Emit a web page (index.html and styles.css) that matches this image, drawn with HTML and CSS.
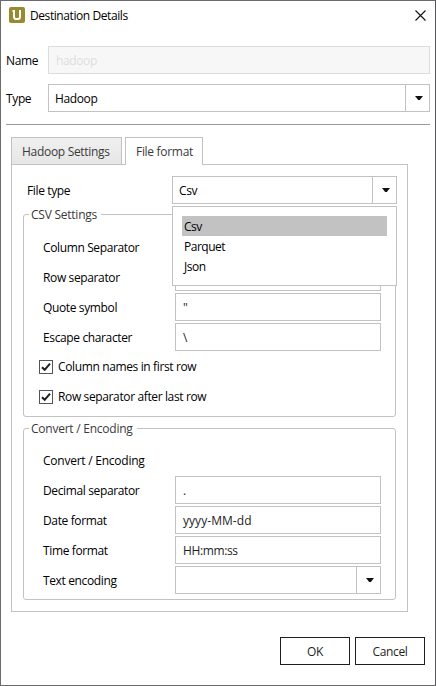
FILE: index.html
```html
<!DOCTYPE html>
<html lang="en">
<head>
<meta charset="utf-8">
<title>Destination Details</title>
<link rel="stylesheet" href="styles.css">
</head>
<body>
<main class="window">
  <header class="titlebar">
    <svg class="logo" width="16" height="16" viewBox="0 0 16 16"><rect width="16" height="16" rx="2" fill="#998a2f"/><path d="M3.5 4H5v5.5Q5 12 7 12h2q2 0 2-2.5V3" fill="none" stroke="#fff" stroke-width="2"/></svg>
    <h1 class="title">Destination Details</h1>
    <svg class="close" width="11" height="11" viewBox="0 0 11 11"><path d="M.5.5l10 10M10.5.5l-10 10" stroke="#111" stroke-width="1.1"/></svg>
  </header>

  <section class="top-form">
    <label class="label">Name</label><div class="field disabled">hadoop</div>
    <label class="label">Type</label>
    <div class="field combo"><span>Hadoop</span><i class="drop"><svg width="8" height="4" viewBox="0 0 8 4"><path d="M0 0h8L4.8 4H3.2z"/></svg></i></div>
  </section>
  <hr class="rule">

  <nav class="tabs">
    <div class="tab"><span>Hadoop Settings</span></div>
    <div class="tab active"><span>File format</span></div>
  </nav>
  <section class="pane">
    <div class="type-row">
      <label class="label">File type</label>
      <div class="combo-wrap">
        <div class="field combo"><span>Csv</span><i class="drop"><svg width="8" height="4" viewBox="0 0 8 4"><path d="M0 0h8L4.8 4H3.2z"/></svg></i></div>
        <ul class="popup"><li class="selected">Csv</li><li>Parquet</li><li>Json</li></ul>
      </div>
    </div>

    <div class="group csv">
      <h2 class="legend">CSV Settings</h2>
      <div class="grid">
        <label class="label">Column Separator</label><div class="field"></div>
        <label class="label">Row separator</label><div class="field"></div>
        <label class="label">Quote symbol</label><div class="field">"</div>
        <label class="label">Escape character</label><div class="field">\</div>
      </div>
      <div class="check"><svg width="14" height="14" viewBox="0 0 14 14"><rect x=".5" y=".5" width="13" height="13" fill="#fff" stroke="#555"/><path d="M3 7.2l2.7 2.6L11 3.6" fill="none" stroke="#1e1e1e" stroke-width="2"/></svg><span>Column names in first row</span></div>
      <div class="check"><svg width="14" height="14" viewBox="0 0 14 14"><rect x=".5" y=".5" width="13" height="13" fill="#fff" stroke="#555"/><path d="M3 7.2l2.7 2.6L11 3.6" fill="none" stroke="#1e1e1e" stroke-width="2"/></svg><span>Row separator after last row</span></div>
    </div>

    <div class="group encoding">
      <h2 class="legend">Convert / Encoding</h2>
      <div class="grid">
        <label class="label wide">Convert / Encoding</label><div></div>
        <label class="label">Decimal separator</label><div class="field">.</div>
        <label class="label">Date format</label><div class="field date">yyyy-MM-dd</div>
        <label class="label">Time format</label><div class="field">HH:mm:ss</div>
        <label class="label">Text encoding</label><div class="field combo"><span></span><i class="drop"><svg width="8" height="4" viewBox="0 0 8 4"><path d="M0 0h8L4.8 4H3.2z"/></svg></i></div>
      </div>
    </div>
  </section>

  <footer class="actions"><button class="button">OK</button><button class="button">Cancel</button></footer>
</main>
</body>
</html>
```

FILE: styles.css
```css
* { box-sizing: border-box; }
body { margin: 0; background: #fff; }
.window {
  width: 436px; height: 686px;
  border: 1px solid #6b6b6d; border-right-color: #55565a;
  background: #fff; color: #000;
  font: 12px/16px "Open Sans", "Noto Sans", sans-serif;
  letter-spacing: -0.37px; white-space: nowrap;
}
.titlebar { display: flex; align-items: flex-start; height: 45px; padding: 6px 9px 0 8px; }
.logo { flex: none; }
.title { margin: 1px auto 0 5px; font-size: 12px; font-weight: 400; line-height: 16px; letter-spacing: -0.42px; }
.close { margin-top: 3px; }

.top-form { display: grid; grid-template-columns: 42px 382px; row-gap: 10px; padding-left: 5px; }
.label { line-height: 30px; height: 28px; }
.wide { letter-spacing: -0.24px; }
.field { height: 28px; border: 1px solid #c2c2c2; background: #fff; padding: 0 7px; line-height: 28px; color: #1e1e1e; }
.date { letter-spacing: 0.05px; }
.disabled { background: #f7f7f7; border-color: #dcdcdc; color: #dedede; }
.combo { display: flex; justify-content: space-between; padding: 0 0 0 6px; line-height: 28px; color: #000; }
.drop { display: flex; align-items: center; justify-content: center; width: 24px; border-left: 1px solid #c2c2c2; padding-left: 3px; fill: #111; }
.rule { height: 1px; margin: 12px 5px; border: 0; background: #999; }

.tabs { display: flex; gap: 3px; padding-left: 10px; height: 27px; letter-spacing: -0.3px; }
.tab { width: 111px; height: 27px; padding-left: 10px; border: 1px solid #c2c2c2; border-bottom: 0; background: linear-gradient(#f0f0f0, #e6e6e6); color: #3a3a3a; line-height: 28px; }
.tab.active { position: relative; width: 78px; height: 28px; background: #fff; }
.pane { width: 397px; height: 448px; margin-left: 10px; padding: 11px; border: 1px solid #c2c2c2; }

.type-row { display: grid; grid-template-columns: 145px 225px; padding-left: 4px; height: 38px; }
.combo-wrap { position: relative; }
.popup { position: absolute; z-index: 2; left: 0; top: 30px; width: 225px; height: 80px; margin: 0; padding: 9px; border: 1px solid #c2c2c2; background: #fff; list-style: none; }
.popup li { height: 20px; padding-left: 2px; line-height: 21px; letter-spacing: -0.5px; }
.popup .selected { background: #c2c2c2; }

.group { width: 373px; border: 1px solid #c2c2c2; border-radius: 3px; }
.csv { height: 203px; margin-bottom: 11px; }
.encoding { height: 172px; }
.legend { width: fit-content; height: 16px; margin: -8px 0 0 5px; padding: 0 4px 0 2px; background: #fff; color: #3a3a3a; font-size: 12px; font-weight: 400; line-height: 16px; letter-spacing: -0.24px; }
.grid { display: grid; grid-template-columns: 132px 206px; grid-auto-rows: 28px; row-gap: 2px; padding-left: 19px; }
.csv .grid { margin-top: 10px; margin-bottom: 9px; }
.encoding .grid { margin-top: 9px; }
.check { display: flex; align-items: center; gap: 5px; height: 14px; margin: 0 0 16px 15px; }

.actions { display: flex; justify-content: flex-end; gap: 5px; margin-top: 25px; padding-right: 10px; }
.button { width: 70px; height: 28px; padding: 1px 0 0; border: 1px solid #1e1e1e; background: #fff; color: #1e1e1e; font: inherit; letter-spacing: inherit; }
```
